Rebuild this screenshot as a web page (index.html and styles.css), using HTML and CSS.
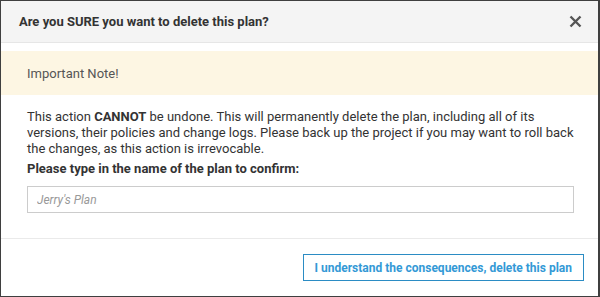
FILE: index.html
```html
<!DOCTYPE html>
<html>
<head>
<meta charset="utf-8">
<link rel="stylesheet" href="styles.css">
</head>
<body>
<div class="dialog">
  <div class="header">
    <div class="title">Are you SURE you want to delete this plan?</div>
    <svg class="close" width="13" height="13" viewBox="0 0 13 13"><path d="M1.5 1.5 L11.5 11.5 M11.5 1.5 L1.5 11.5" stroke="#555" stroke-width="2.4" fill="none"/></svg>
  </div>
  <div class="note">Important Note!</div>
  <div class="content">
    <p class="text">This action <b>CANNOT</b> be undone. This will permanently delete the plan, including all of its versions, their policies and change logs. Please back up the project if you may want to roll back the changes, as this action is irrevocable.</p>
    <div class="label">Please type in the name of the plan to confirm:</div>
    <input class="field" type="text" placeholder="Jerry's Plan">
  </div>
  <div class="footer">
    <button class="btn">I understand the consequences, delete this plan</button>
  </div>
</div>
</body>
</html>
```
FILE: styles.css
```css
html, body {
  margin: 0;
  padding: 0;
  background: #3f3f3f;
}
body {
  font-family: Roboto, "Liberation Sans", sans-serif;
  color: #333;
  height: 297px;
  overflow: hidden;
}
.dialog {
  margin: 1px 2px 0 1px;
  height: 295px;
  background: #fff;
  display: flex;
  flex-direction: column;
}
.header {
  height: 42px;
  box-sizing: border-box;
  background: #f4f4f4;
  border-bottom: 1px solid #e6e6e6;
  display: flex;
  align-items: center;
  justify-content: space-between;
  padding: 0 16px 0 18px;
  flex: none;
}
.title {
  font-size: 13px;
  font-weight: bold;
  color: #333;
}
.close {
  display: block;
}
.note {
  margin-top: 8px;
  height: 44px;
  background: #fdf6e3;
  display: flex;
  align-items: center;
  padding-left: 26px;
  font-size: 13px;
  color: #555;
  flex: none;
}
.content {
  padding: 0 24px 0 26px;
  flex: none;
}
.text {
  margin: 14px -8px 0 0;
  font-size: 13px;
  line-height: 16px;
  color: #333;
}
.text b {
  font-weight: bold;
}
.label {
  margin-top: 4px;
  font-size: 13px;
  line-height: 15px;
  font-weight: bold;
  color: #333;
}
.field {
  display: block;
  box-sizing: border-box;
  width: 100%;
  height: 27px;
  margin-top: 10px;
  border: 1px solid #ccc;
  padding: 0 9px;
  font-family: Roboto, "Liberation Sans", sans-serif;
  font-size: 12px;
  outline: none;
}
.field::placeholder {
  color: #999;
  font-style: italic;
}
.footer {
  margin-top: 25px;
  border-top: 1px solid #eaeaea;
  display: flex;
  justify-content: flex-end;
  padding: 15px 14px 0 0;
}
.btn {
  height: 27px;
  box-sizing: border-box;
  border: 1px solid #2b8cc4;
  background: #fff;
  color: #3399d6;
  font-family: Roboto, "Liberation Sans", sans-serif;
  font-size: 12px;
  font-weight: bold;
  padding: 0 11px;
}
```
